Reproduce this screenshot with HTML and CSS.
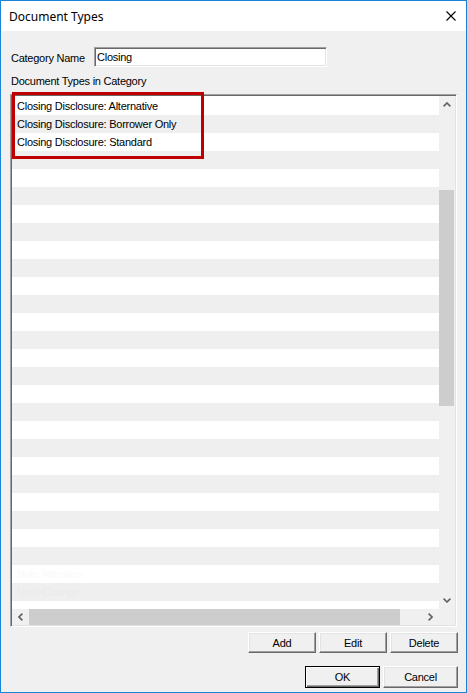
FILE: index.html
```html
<!DOCTYPE html>
<html lang="en">
<head>
    <meta charset="UTF-8">
    <title>Document Types</title>
    <link rel="stylesheet" href="styles.css">
</head>
<body>
    <div class="window">
        <div class="titlebar">
            <span class="title">Document Types</span>
            <svg class="close" width="10" height="10" viewBox="0 0 10 10">
                <path d="M0.5 0.5 L9.5 9.5 M9.5 0.5 L0.5 9.5" stroke="#000" stroke-width="1.1" fill="none"/>
            </svg>
        </div>
        <div class="content">
            <div class="field-row">
                <label class="field-label">Category Name</label>
                <div class="textbox">Closing</div>
            </div>
            <div class="section-label">Document Types in Category</div>

            <div class="listbox">
                <div class="list-main">
                    <ul class="rows">
                        <li>Closing Disclosure: Alternative</li>
                        <li>Closing Disclosure: Borrower Only</li>
                        <li>Closing Disclosure: Standard</li>
                        <li></li><li></li><li></li><li></li><li></li>
                        <li></li><li></li><li></li><li></li><li></li>
                        <li></li><li></li><li></li><li></li><li></li>
                        <li></li><li></li><li></li><li></li><li></li>
                        <li></li><li></li><li></li>
                        <li class="ghost">Note Attention</li>
                        <li class="ghost">Note Change</li>
                        <li></li>
                    </ul>
                    <div class="vscroll">
                        <div class="arrow">
                            <svg width="8" height="5" viewBox="0 0 8 5"><polyline points="0.6,4.4 4,1 7.4,4.4" stroke="#606060" stroke-width="1.6" fill="none"/></svg>
                        </div>
                        <div class="vtrack"><div class="vthumb"></div></div>
                        <div class="arrow">
                            <svg width="8" height="5" viewBox="0 0 8 5"><polyline points="0.6,0.6 4,4 7.4,0.6" stroke="#606060" stroke-width="1.6" fill="none"/></svg>
                        </div>
                    </div>
                </div>
                <div class="hscroll-row">
                    <div class="hscroll">
                        <div class="arrow">
                            <svg width="5" height="8" viewBox="0 0 5 8"><polyline points="4.4,0.6 1,4 4.4,7.4" stroke="#606060" stroke-width="1.6" fill="none"/></svg>
                        </div>
                        <div class="htrack"><div class="hthumb"></div></div>
                        <div class="arrow">
                            <svg width="5" height="8" viewBox="0 0 5 8"><polyline points="0.6,0.6 4,4 0.6,7.4" stroke="#606060" stroke-width="1.6" fill="none"/></svg>
                        </div>
                    </div>
                    <div class="corner"></div>
                </div>
                <div class="highlight"></div>
            </div>

            <div class="button-row">
                <button class="btn">Add</button>
                <button class="btn">Edit</button>
                <button class="btn">Delete</button>
            </div>
            <div class="button-row bottom">
                <button class="btn wide default">OK</button>
                <button class="btn wide">Cancel</button>
            </div>
        </div>
    </div>
</body>
</html>
```

FILE: styles.css
```css
body {
    margin: 0;
    font-family: "Liberation Sans", Arial, sans-serif;
    font-size: 11px;
    color: #000;
}
.window {
    width: 467px;
    height: 693px;
    box-sizing: border-box;
    border: 1px solid #1883d7;
    display: flex;
    flex-direction: column;
    background: #f0f0f0;
}
.titlebar {
    height: 30px;
    flex-shrink: 0;
    background: #fff;
    display: flex;
    align-items: center;
    justify-content: space-between;
    padding: 0 10px 0 8px;
}
.title {
    font-family: "Noto Sans", "Open Sans", sans-serif;
    font-size: 12px;
    color: #000;
}
.close {
    display: block;
}
.content {
    flex: 1;
    padding: 16px 9px 0 9px;
    letter-spacing: -0.25px;
}
.field-row {
    display: flex;
    align-items: center;
    height: 20px;
}
.field-label {
    width: 83px;
    margin-left: 1px;
    padding-top: 1px;
}
.textbox {
    width: 233px;
    height: 20px;
    box-sizing: border-box;
    background: #fff;
    border: 1px solid;
    border-color: #a0a0a0 #fff #fff #a0a0a0;
    box-shadow: inset 1px 1px #696969, inset -1px -1px #e3e3e3;
    padding: 0 2px;
    line-height: 18px;
}
.section-label {
    margin: 8px 0 0 1px;
    line-height: 13px;
}
.listbox {
    position: relative;
    margin-top: 6px;
    height: 533px;
    box-sizing: border-box;
    border: 1px solid;
    border-color: #a0a0a0 #fff #fff #a0a0a0;
    box-shadow: inset 1px 1px #696969, inset -1px -1px #e3e3e3;
    padding: 1px;
    display: flex;
    flex-direction: column;
}
.list-main {
    display: flex;
    height: 513px;
}
.rows {
    flex: 1;
    margin: 0;
    padding: 1px 0 0 0;
    list-style: none;
    background: #fff;
    overflow: hidden;
}
.rows li {
    height: 18px;
    line-height: 18px;
    padding-left: 5px;
    white-space: nowrap;
}
.rows li:nth-child(even) {
    background: #efefef;
}
.rows li.ghost {
    color: #fafafa;
}
.rows li.ghost:nth-child(even) {
    color: #ebebeb;
}
.vscroll {
    width: 16px;
    display: flex;
    flex-direction: column;
    background: #f0f0f0;
}
.arrow {
    width: 17px;
    height: 17px;
    flex-shrink: 0;
    display: flex;
    align-items: center;
    justify-content: center;
}
.vscroll .arrow {
    width: 16px;
}
.vtrack {
    flex: 1;
}
.vthumb {
    margin-top: 77px;
    width: 15px;
    height: 216px;
    background: #cdcdcd;
}
.hscroll-row {
    display: flex;
    height: 16px;
}
.hscroll {
    flex: 1;
    display: flex;
    background: #f0f0f0;
}
.hscroll .arrow {
    height: 16px;
}
.htrack {
    flex: 1;
}
.hthumb {
    width: 371px;
    height: 16px;
    background: #cdcdcd;
}
.corner {
    width: 16px;
    background: #f0f0f0;
}
.highlight {
    position: absolute;
    left: 1px;
    top: -3px;
    width: 192px;
    height: 67px;
    box-sizing: border-box;
    border: 3px solid #c00000;
}
.button-row {
    display: flex;
    justify-content: flex-end;
    gap: 3px;
    margin: 5px -1px 0 0;
}
.button-row.bottom {
    margin-top: 13px;
}
.btn {
    width: 68px;
    height: 21px;
    padding: 0;
    font-family: "Liberation Sans", Arial, sans-serif;
    font-size: 11px;
    letter-spacing: -0.25px;
    color: #000;
    background: #f0f0f0;
    border: 1px solid;
    border-color: #fff #696969 #696969 #fff;
    box-shadow: inset -1px -1px #a0a0a0, inset 1px 1px #e3e3e3;
}
.btn.wide {
    width: 75px;
    height: 22px;
}
.btn.default {
    border-color: #000;
    box-shadow: inset 1px 1px #fff, inset -1px -1px #696969, inset -2px -2px #a0a0a0;
}
```
